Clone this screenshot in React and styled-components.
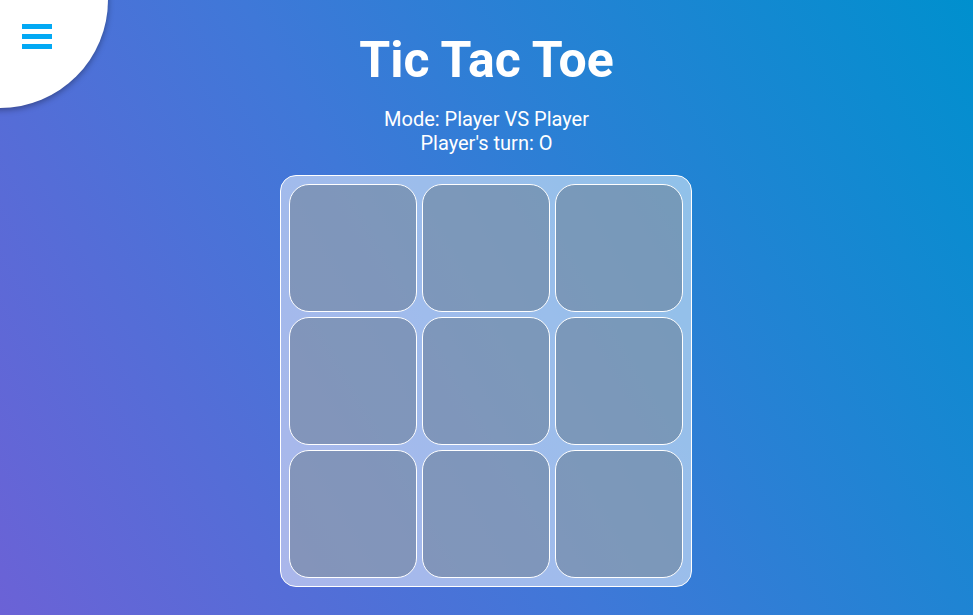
import React, { useState } from "react";
import styled, { createGlobalStyle } from "styled-components";

const GlobalStyle = createGlobalStyle`
  html, body {
    margin: 0;
    padding: 0;
    height: 100%;
  }
  body {
    font-family: Roboto, "Liberation Sans", Arial, sans-serif;
    color: #ffffff;
  }
  * {
    box-sizing: border-box;
  }
`;

const App = () => {
  const [cells, setCells] = useState(Array(9).fill(null));
  const [turn, setTurn] = useState("O");

  const play = (i) => {
    if (cells[i]) return;
    const next = cells.slice();
    next[i] = turn;
    setCells(next);
    setTurn(turn === "O" ? "X" : "O");
  };

  return (
    <>
      <GlobalStyle />
      <Page>
        <MenuButton aria-label="menu">
          <Burger>
            <Bar />
            <Bar />
            <Bar />
          </Burger>
        </MenuButton>
        <Title>Tic Tac Toe</Title>
        <Info>
          <div>Mode: Player VS Player</div>
          <div>Player's turn: {turn}</div>
        </Info>
        <Board>
          {cells.map((value, i) => (
            <Cell key={i} onClick={() => play(i)}>
              {value}
            </Cell>
          ))}
        </Board>
      </Page>
    </>
  );
};

export default App;

const Page = styled.div`
  position: relative;
  min-height: 100vh;
  overflow: hidden;
  display: flex;
  flex-direction: column;
  align-items: center;
  padding-top: 28px;
  background: linear-gradient(60deg, #6b62d6 0%, #3f78d8 45%, #0090ce 100%);
`;

const MenuButton = styled.div`
  position: absolute;
  top: -108px;
  left: -108px;
  width: 216px;
  height: 216px;
  border-radius: 50%;
  background: #ffffff;
  box-shadow: 0 2px 6px rgba(0, 0, 0, 0.35);
  cursor: pointer;
`;

const Burger = styled.div`
  position: absolute;
  top: 132px;
  left: 130px;
  display: flex;
  flex-direction: column;
  gap: 5px;
`;

const Bar = styled.span`
  display: block;
  width: 30px;
  height: 5px;
  background: #03a9f4;
`;

const Title = styled.h1`
  margin: 0;
  font-size: 50px;
  font-weight: 700;
  line-height: 64px;
`;

const Info = styled.div`
  margin-top: 15px;
  font-size: 20px;
  line-height: 24px;
  text-align: center;
`;

const Board = styled.div`
  margin-top: 20px;
  margin-left: -1px;
  width: 412px;
  height: 412px;
  padding: 8px;
  display: grid;
  grid-template-columns: repeat(3, 1fr);
  grid-template-rows: repeat(3, 1fr);
  gap: 5.5px;
  background: rgba(255, 255, 255, 0.5);
  border: 1px solid #ffffff;
  border-radius: 16px;
`;

const Cell = styled.div`
  display: flex;
  align-items: center;
  justify-content: center;
  border: 1px solid #ffffff;
  border-radius: 20px;
  background: rgba(80, 100, 120, 0.42);
  font-size: 72px;
  font-weight: 700;
  cursor: pointer;
`;
